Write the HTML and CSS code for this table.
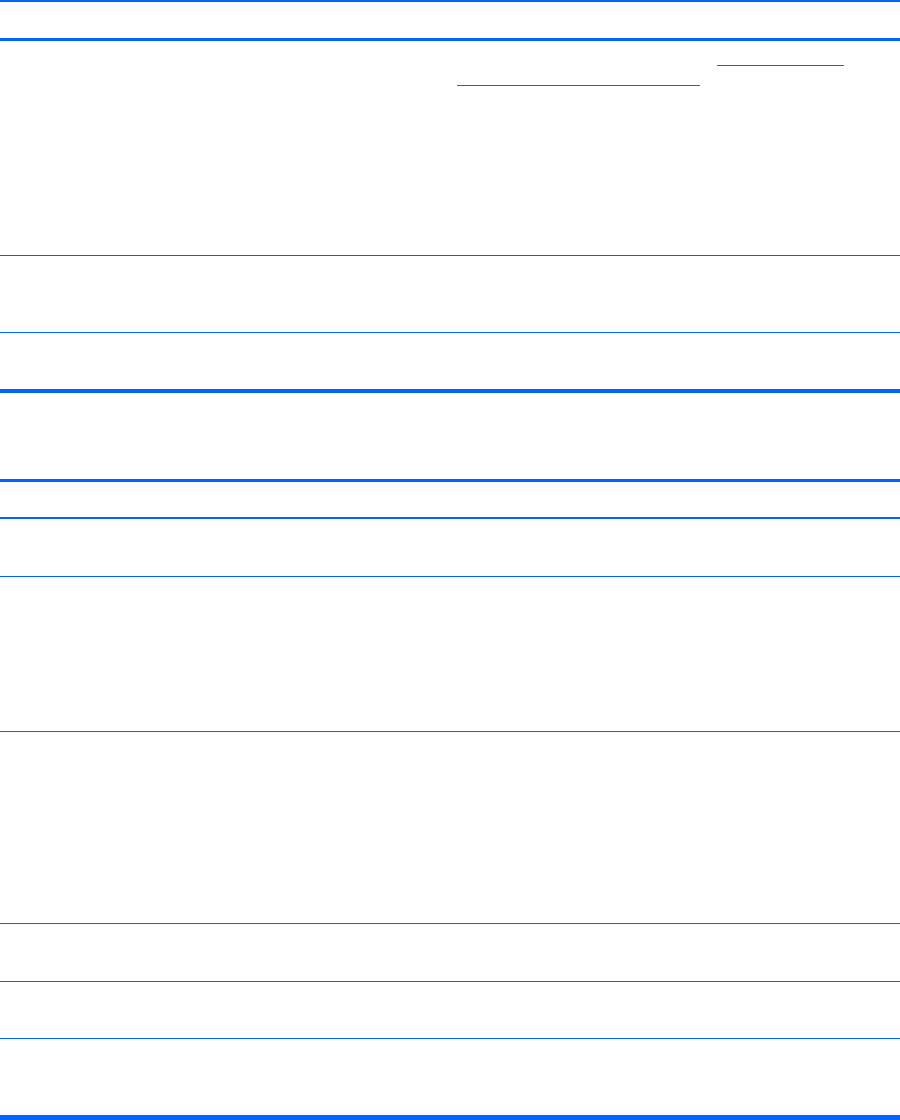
FILE: index.html
```html
<!DOCTYPE html>
<html>
<head>
<meta charset="utf-8">
<link rel="stylesheet" href="styles.css">
</head>
<body>
<div class="page">
  <div class="table t1">
    <div class="row head h1"></div>
    <div class="row r-a">
      <div class="cell-right">
        <div class="link l1"></div>
        <div class="link l2"></div>
      </div>
    </div>
    <div class="row r-b"></div>
    <div class="row r-c last1"></div>
  </div>
  <div class="table t2">
    <div class="row head h2"></div>
    <div class="row r-d"></div>
    <div class="row r-e"></div>
    <div class="row r-f"></div>
    <div class="row r-g"></div>
    <div class="row r-h"></div>
    <div class="row r-i last2"></div>
  </div>
</div>
</body>
</html>
```
FILE: styles.css
```css
html, body {
  margin: 0;
  padding: 0;
  background: #ffffff;
  font-family: "Liberation Sans", Arial, sans-serif;
}
.page {
  width: 900px;
  display: flex;
  flex-direction: column;
}
.table {
  display: flex;
  flex-direction: column;
  width: 900px;
}
.row {
  box-sizing: content-box;
  border-bottom: 1px solid #0066ff;
}
.t1 {
  border-top: 2px solid #0066ff;
}
.h1 {
  height: 36px;
  border-bottom: 3px solid #0066ff;
}
.r-a { height: 214px; }
.r-b { height: 76px; }
.r-c { height: 56px; }
.last1 { border-bottom: 4px solid #0066ff; }

.t2 {
  margin-top: 86px;
  border-top: 3px solid #0066ff;
}
.h2 {
  height: 35px;
  border-bottom: 2px solid #0066ff;
}
.r-d { height: 57px; }
.r-e { height: 154px; }
.r-f { height: 191px; }
.r-g { height: 57px; }
.r-h { height: 56px; }
.r-i { height: 76px; }
.last2 { border-bottom: 5px solid #0066ff; }

.cell-right {
  margin-left: 457px;
  padding-top: 24px;
  display: flex;
  flex-direction: column;
  gap: 19px;
}
.link {
  height: 1px;
  background: #1463dc;
}
.l1 {
  margin-left: 260px;
  width: 127px;
}
.l2 {
  width: 243px;
}
```
